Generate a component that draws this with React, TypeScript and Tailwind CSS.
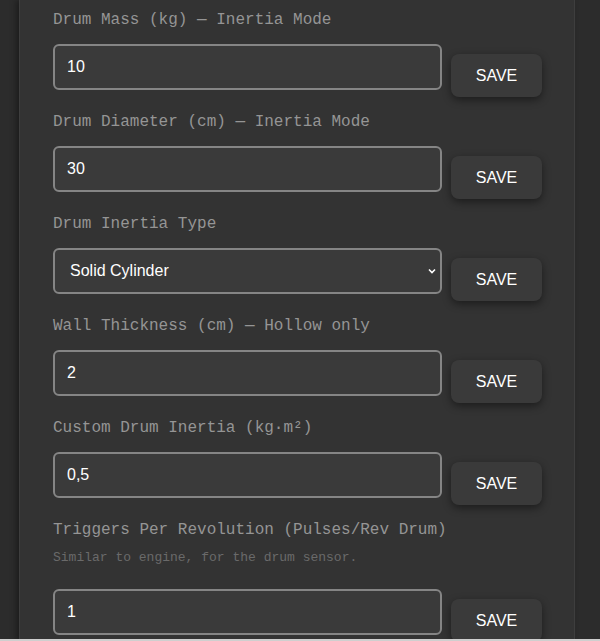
import React from "react";

const mono = { fontFamily: '"Courier New", "Nimbus Mono PS", "FreeMono", "Liberation Mono", monospace' };
const sans = { fontFamily: '"Liberation Sans", Arial, sans-serif' };

function SaveBtn() {
  return (
    <button
      className="mt-[10px] h-[43px] w-[91px] shrink-0 rounded-[8px] bg-[#3a3a3a] text-[16px] text-white shadow-[0_3px_8px_rgba(0,0,0,0.45)]"
      style={sans}
    >
      SAVE
    </button>
  );
}

function Field({ label, value, hint, select }: { label: string; value: string; hint?: string; select?: boolean }) {
  return (
    <div className="mb-[14px]">
      <div className="h-[22px] text-[16px] leading-[22px] text-[#959595]" style={mono}>
        {label}
      </div>
      {hint ? (
        <div className="mt-[7px] h-[20px] text-[13px] leading-[20px] text-[#6a6a6a]" style={mono}>
          {hint}
        </div>
      ) : null}
      <div className={`flex gap-[9px] ${hint ? "mt-[21px]" : "mt-[13px]"}`}>
        {select ? (
          <div className="relative h-[46px] flex-1">
            <select
              className="h-full w-full appearance-none rounded-[6px] border-2 border-[#858585] bg-[#3a3a3a] pl-[15px] text-[16px] text-white outline-none"
              style={sans}
              defaultValue={value}
            >
              <option>{value}</option>
            </select>
            <svg
              className="pointer-events-none absolute right-[5px] top-[19px]"
              width="10"
              height="8"
              viewBox="0 0 10 8"
            >
              <path d="M2 2.5 L5 5.5 L8 2.5" stroke="#ffffff" strokeWidth="1.6" fill="none" />
            </svg>
          </div>
        ) : (
          <input
            className="h-[46px] min-w-0 flex-1 rounded-[6px] border-2 border-[#858585] bg-[#3a3a3a] px-[12px] text-[16px] text-white outline-none"
            style={sans}
            defaultValue={value}
          />
        )}
        <SaveBtn />
      </div>
    </div>
  );
}

export default function App() {
  return (
    <div className="relative h-[641px] w-[600px] overflow-hidden bg-[#2c2c2c]">
      <div className="ml-[19px] h-[641px] w-[556px] border-x border-[#3e3e3e] bg-[#333333] pl-[33px] pr-[32px] pt-[9px] shadow-[-3px_0_6px_rgba(0,0,0,0.35)]">
        <Field label="Drum Mass (kg) — Inertia Mode" value="10" />
        <Field label="Drum Diameter (cm) — Inertia Mode" value="30" />
        <Field label="Drum Inertia Type" value="Solid Cylinder" select />
        <Field label="Wall Thickness (cm) — Hollow only" value="2" />
        <Field label="Custom Drum Inertia (kg·m²)" value="0,5" />
        <Field
          label="Triggers Per Revolution (Pulses/Rev Drum)"
          value="1"
          hint="Similar to engine, for the drum sensor."
        />
      </div>
      <div className="absolute bottom-0 left-0 h-[2px] w-full bg-[#cfcfcf]" />
    </div>
  );
}
